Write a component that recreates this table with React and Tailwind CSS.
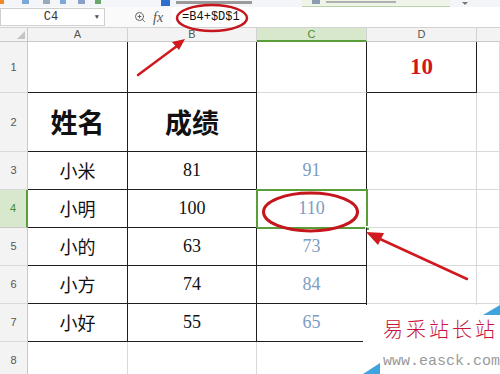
import React from "react";
import { ZoomIn } from "lucide-react";

// border helpers (written out in full so tailwind picks them up)
const R_BLACK = "border-r border-r-[#1f1f1f]";
const R_GRAY = "border-r border-r-[#d9d9d9]";
const B_BLACK = "border-b border-b-[#1f1f1f]";
const B_GRAY = "border-b border-b-[#d9d9d9]";

const CJK = { fontFamily: '"Noto Sans CJK SC", sans-serif' };
const SERIF = { fontFamily: '"Liberation Serif", serif' };

const rows = [
  { n: 1, h: "h-[51px]", a: "", b: "", c: "", d: "10" },
  { n: 2, h: "h-[59px]", a: "姓名", b: "成绩", c: "", big: true },
  { n: 3, h: "h-[38px]", a: "小米", b: "81", c: "91" },
  { n: 4, h: "h-[38px]", a: "小明", b: "100", c: "110", sel: true },
  { n: 5, h: "h-[38px]", a: "小的", b: "63", c: "73" },
  { n: 6, h: "h-[38px]", a: "小方", b: "74", c: "84" },
  { n: 7, h: "h-[38px]", a: "小好", b: "55", c: "65" },
  { n: 8, h: "h-[38px]", a: "", b: "", c: "" },
];

const Cell = ({ className = "", children, style }) => (
  <div className={`relative flex shrink-0 items-center justify-center ${className}`} style={style}>
    {children}
  </div>
);

const Row = ({ r }) => {
  const inTable = r.n <= 7;
  const aB = inTable ? B_BLACK : B_GRAY;
  const cB = r.n >= 2 && r.n <= 7 ? B_BLACK : B_GRAY;
  return (
    <div className={`flex ${r.h}`}>
      {/* row number */}
      <Cell
        className={`w-[28px] text-[11px] ${
          r.sel
            ? "bg-[#d7e8cd] text-[#4b8a2e] border-r-2 border-r-[#5a9e3a] border-b border-b-[#c9c9c9]"
            : "bg-[#f3f3f3] text-[#555] border-r border-r-[#c9c9c9] border-b border-b-[#d9d9d9]"
        }`}
        style={{ fontFamily: '"Liberation Sans", sans-serif' }}
      >
        {r.n}
      </Cell>

      {/* A */}
      <Cell
        className={`w-[100px] ${inTable ? R_BLACK : R_GRAY} ${aB} text-[#111] ${
          r.big ? "text-[27px] font-bold" : "text-[18px]"
        }`}
        style={CJK}
      >
        {r.a}
      </Cell>

      {/* B */}
      <Cell
        className={`w-[129px] ${inTable ? R_BLACK : R_GRAY} ${aB} text-[#111] ${
          r.big ? "text-[27px] font-bold" : "text-[18px]"
        }`}
        style={r.big ? CJK : SERIF}
      >
        {r.b}
      </Cell>

      {/* C */}
      <Cell className={`w-[110px] ${inTable ? R_BLACK : R_GRAY} ${cB} text-[18px] text-[#7d9cc2]`} style={SERIF}>
        {r.c}
        {r.sel && (
          <div className="absolute -left-px -top-px -right-[2px] -bottom-[2px] border-2 border-[#5a9e3a]">
            <div className="absolute -right-[4px] -bottom-[4px] w-[5px] h-[5px] bg-[#5a9e3a] border border-white" />
          </div>
        )}
      </Cell>

      {/* D */}
      <Cell
        className={`w-[110px] ${r.n === 1 ? R_BLACK : R_GRAY} ${r.n === 1 ? B_BLACK : B_GRAY} text-[23px] font-semibold text-[#d0161b]`}
        style={SERIF}
      >
        {r.d}
      </Cell>

      {/* E */}
      <Cell className={`flex-1 ${R_GRAY} ${B_GRAY}`} />
    </div>
  );
};

const Annotations = () => (
  <svg className="absolute inset-0 pointer-events-none" width="500" height="374" viewBox="0 0 500 374">
    {/* ring round the formula */}
    <ellipse cx="212" cy="18" rx="35" ry="13" fill="none" stroke="#c4161c" strokeWidth="2.5" />
    {/* arrow up to formula */}
    <line x1="138" y1="75" x2="177" y2="46" stroke="#d11a1f" strokeWidth="2.5" strokeLinecap="round" />
    <polygon points="185,39 179,50 172,42" fill="#d11a1f" />
    {/* ring round 110 */}
    <ellipse cx="310.5" cy="212" rx="47" ry="19" fill="none" stroke="#c4161c" strokeWidth="3" />
    {/* arrow to C4 */}
    <line x1="467" y1="279" x2="380" y2="239" stroke="#d11a1f" strokeWidth="2.5" strokeLinecap="round" />
    <polygon points="366,232 384,233 378,245" fill="#d11a1f" />
  </svg>
);

export default function App() {
  return (
    <div className="relative w-[500px] h-[374px] overflow-hidden bg-white">
      {/* top strip: toolbar + tabs, cut off */}
      <div className="flex h-[7px] items-start bg-[#f3f5f8] overflow-hidden">
        <div className="w-[4px] h-[4px] bg-[#f08a24]" />
        <div className="ml-[18px] w-[7px] h-[4px] bg-[#7fa6d8]" />
        <div className="ml-[14px] w-[7px] h-[4px] bg-[#9aa9bb]" />
        <div className="ml-[10px] w-[6px] h-[4px] bg-[#7fa6d8]" />
        <div className="ml-[12px] w-[7px] h-[4px] bg-[#8aa0c8]" />
        <div className="ml-[10px] w-[6px] h-[4px] bg-[#6aa86a]" />
        <div className="ml-[60px] w-[9px] h-[6px] bg-[#2f6fd0]" />
        <div className="ml-[6px] mt-[1px] w-[76px] h-[3px] bg-[#9a9a9a]" />
        <div className="ml-[50px] w-[148px] h-[7px] bg-[#eef4e8] border-b border-b-[#b9d4a8] flex items-start">
          <div className="ml-[10px] w-[8px] h-[4px] bg-[#8c9cb0]" />
          <div className="ml-[6px] mt-[1px] w-[70px] h-[2px] bg-[#b0b0b0]" />
        </div>
        <div className="ml-[12px] mt-[2px] w-0 h-0 border-x-[3px] border-x-transparent border-t-[3px] border-t-[#777]" />
      </div>

      {/* formula bar */}
      <div className="flex h-[21px] items-center bg-[#fafafa] border-b border-b-[#d2d2d2]">
        <div
          className="flex h-[18px] w-[105px] items-center bg-white border border-[#cfcfcf] text-[12px] text-[#333]"
          style={{ fontFamily: '"Liberation Mono", monospace' }}
        >
          <span className="flex-1 pl-[6px] text-center">C4</span>
          <span className="pr-[5px] text-[7px] text-[#555]">▼</span>
        </div>
        <ZoomIn className="ml-[29px] text-[#666]" size={12} strokeWidth={2} />
        <span className="ml-[7px] text-[14px] italic text-[#555]" style={SERIF}>
          fx
        </span>
        <div className="ml-[9px] flex h-[20px] flex-1 items-center bg-white pl-[10px]">
          <span className="text-[12px] text-[#111]" style={{ fontFamily: '"Liberation Mono", monospace' }}>
            =B4+$D$1
          </span>
        </div>
      </div>

      {/* column headers */}
      <div className="flex h-[14px] text-[11px] text-[#555]" style={{ fontFamily: '"Liberation Sans", sans-serif' }}>
        <div className="relative w-[28px] shrink-0 bg-[#f3f3f3] border-r border-r-[#c9c9c9] border-b border-b-[#c9c9c9]">
          <div
            className="absolute right-[2px] bottom-[2px] w-0 h-0 border-l-[8px] border-l-transparent border-b-[8px] border-b-[#c4c4c4]"
          />
        </div>
        <div className="flex w-[100px] shrink-0 items-center justify-center bg-[#f3f3f3] border-r border-r-[#d2d2d2] border-b border-b-[#c9c9c9]">A</div>
        <div className="flex w-[129px] shrink-0 items-center justify-center bg-[#f3f3f3] border-r border-r-[#d2d2d2] border-b border-b-[#c9c9c9]">B</div>
        <div className="flex w-[110px] shrink-0 items-center justify-center bg-[#d7e8cd] text-[#4b8a2e] border-r border-r-[#d2d2d2] border-b-2 border-b-[#5a9e3a]">C</div>
        <div className="flex w-[110px] shrink-0 items-center justify-center bg-[#f3f3f3] border-r border-r-[#d2d2d2] border-b border-b-[#c9c9c9]">D</div>
        <div className="flex-1 bg-[#f3f3f3] border-b border-b-[#c9c9c9]" />
      </div>

      {/* sheet */}
      {rows.map((r) => (
        <Row key={r.n} r={r} />
      ))}

      <Annotations />

      {/* site watermark */}
      <div className="absolute left-[363px] top-[305px] w-[137px] h-[69px] bg-white">
        <svg className="absolute inset-0" width="137" height="69" viewBox="0 0 137 69">
          <polygon points="120,10 137,0 137,10" fill="#3fa3dd" />
          <polygon points="0,69 17,58 17,69" fill="#3fa3dd" />
        </svg>
        <div
          className="absolute left-[20px] top-[14px] text-[20px] font-light leading-none tracking-[3px] text-[#c8143c]"
          style={CJK}
        >
          易采站长站
        </div>
        <div
          className="absolute left-[20px] top-[49px] text-[15px] leading-none text-[#9a9a9a]"
          style={{ fontFamily: '"Liberation Mono", monospace' }}
        >
          www.easck.com
        </div>
      </div>
    </div>
  );
}
